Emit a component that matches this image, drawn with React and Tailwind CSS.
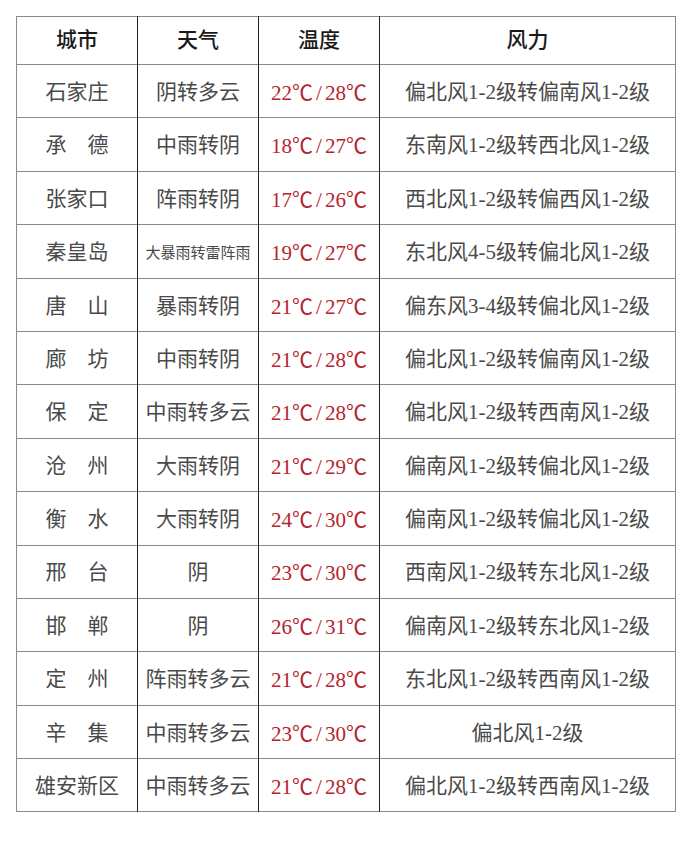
import React from 'react'

const rows = [
  ['石家庄', '阴转多云', '22', '28', '偏北风1-2级转偏南风1-2级'],
  ['承　德', '中雨转阴', '18', '27', '东南风1-2级转西北风1-2级'],
  ['张家口', '阵雨转阴', '17', '26', '西北风1-2级转偏西风1-2级'],
  ['秦皇岛', '大暴雨转雷阵雨', '19', '27', '东北风4-5级转偏北风1-2级', true],
  ['唐　山', '暴雨转阴', '21', '27', '偏东风3-4级转偏北风1-2级'],
  ['廊　坊', '中雨转阴', '21', '28', '偏北风1-2级转偏南风1-2级'],
  ['保　定', '中雨转多云', '21', '28', '偏北风1-2级转西南风1-2级'],
  ['沧　州', '大雨转阴', '21', '29', '偏南风1-2级转偏北风1-2级'],
  ['衡　水', '大雨转阴', '24', '30', '偏南风1-2级转偏北风1-2级'],
  ['邢　台', '阴', '23', '30', '西南风1-2级转东北风1-2级'],
  ['邯　郸', '阴', '26', '31', '偏南风1-2级转东北风1-2级'],
  ['定　州', '阵雨转多云', '21', '28', '东北风1-2级转西南风1-2级'],
  ['辛　集', '中雨转多云', '23', '30', '偏北风1-2级'],
  ['雄安新区', '中雨转多云', '21', '28', '偏北风1-2级转西南风1-2级'],
]

const font = { fontFamily: '"Liberation Serif", "Noto Sans CJK SC", serif' }
const cjk = { fontFamily: '"Noto Sans CJK SC", sans-serif' }

const Temp = ({ lo, hi }) => (
  <span>
    {lo}
    <span style={cjk}>℃</span>
    <span className="px-[3px]">/</span>
    {hi}
    <span style={cjk}>℃</span>
  </span>
)

export default function App() {
  return (
    <div className="w-[690px] h-[844px] bg-white pt-4 pl-4" style={font}>
      <table className="w-[660px] border-collapse border border-[#8a8a8a] text-[21px] text-[#4a4a4a]">
        <thead>
          <tr className="h-[48px] border-b border-[#8a8a8a] text-[#1a1a1a]">
            <th className="w-[121px] border-r border-[#222] font-medium">城市</th>
            <th className="w-[121px] border-r border-[#222] font-medium">天气</th>
            <th className="w-[121px] border-r border-[#222] font-medium">温度</th>
            <th className="font-medium">风力</th>
          </tr>
        </thead>
        <tbody>
          {rows.map(([city, weather, lo, hi, wind, small], i) => (
            <tr key={i} className="h-[53.4px] border-b border-[#8a8a8a]">
              <td className="border-r border-[#222] text-center pt-[3px]">{city}</td>
              <td className={`border-r border-[#222] text-center pt-[3px] ${small ? 'text-[15px]' : ''}`}>{weather}</td>
              <td className="border-r border-[#222] text-center pt-[3px] text-[#b3242e]">
                <Temp lo={lo} hi={hi} />
              </td>
              <td className="text-center pt-[3px]">{wind}</td>
            </tr>
          ))}
        </tbody>
      </table>
    </div>
  )
}
